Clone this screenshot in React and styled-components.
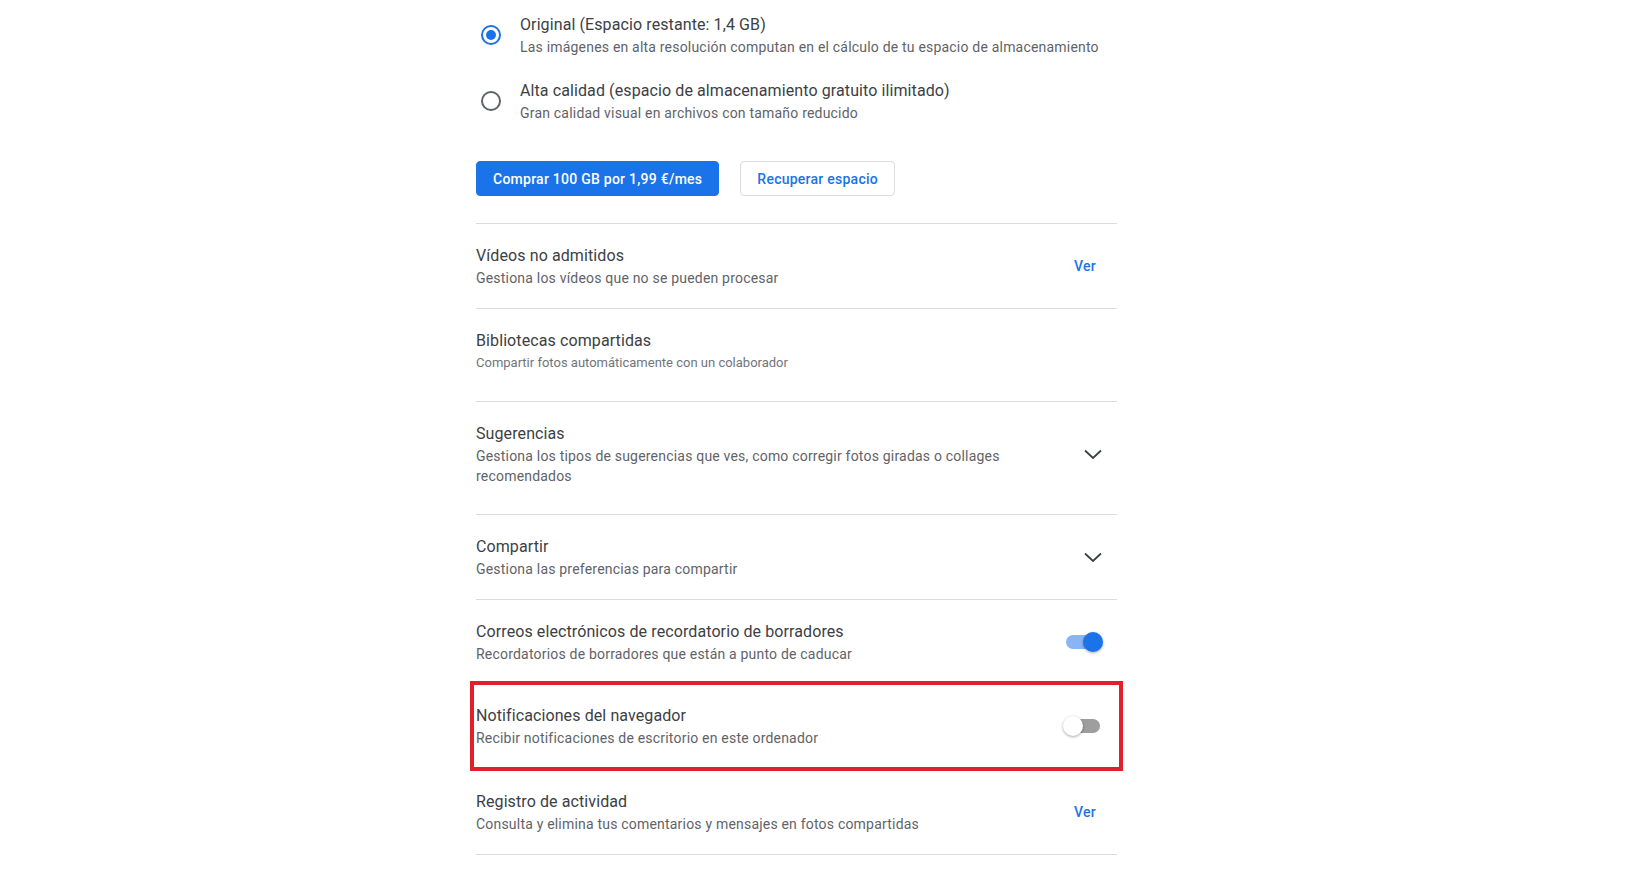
import React from 'react';
import styled, { createGlobalStyle } from 'styled-components';

const GlobalStyle = createGlobalStyle`
  html, body {
    margin: 0;
    padding: 0;
    background: #ffffff;
    font-family: Roboto, "Liberation Sans", Arial, sans-serif;
    color: #3c4043;
  }
`;

const SETTINGS = [
    {
        title: 'Vídeos no admitidos',
        text: 'Gestiona los vídeos que no se pueden procesar',
        action: 'link'
    },
    {
        title: 'Bibliotecas compartidas',
        text: 'Compartir fotos automáticamente con un colaborador',
        small: true,
        extra: 8
    },
    {
        title: 'Sugerencias',
        text: 'Gestiona los tipos de sugerencias que ves, como corregir fotos giradas o collages recomendados',
        action: 'chevron',
        extra: 8
    },
    {
        title: 'Compartir',
        text: 'Gestiona las preferencias para compartir',
        action: 'chevron'
    },
    {
        title: 'Correos electrónicos de recordatorio de borradores',
        text: 'Recordatorios de borradores que están a punto de caducar',
        action: 'switch',
        on: true
    },
    {
        title: 'Notificaciones del navegador',
        text: 'Recibir notificaciones de escritorio en este ordenador',
        action: 'switch',
        on: false,
        noBorder: true,
        highlight: true,
        extra: 2
    },
    {
        title: 'Registro de actividad',
        text: 'Consulta y elimina tus comentarios y mensajes en fotos compartidas',
        action: 'link',
        noBorder: true,
        last: true
    }
];

const Chevron = () => (
    <svg width="24" height="24" viewBox="0 0 24 24" fill="none">
        <polyline points="4,8.5 12,16 20,8.5" stroke="#3c4043" strokeWidth="1.8" />
    </svg>
);

const App = () => {
    return (
        <Page>
            <GlobalStyle />
            <Column>
                <RadioGroup>
                    <RadioOption>
                        <Radio checked />
                        <div>
                            <Title>Original (Espacio restante: 1,4 GB)</Title>
                            <Sub>Las imágenes en alta resolución computan en el cálculo de tu espacio de almacenamiento</Sub>
                        </div>
                    </RadioOption>
                    <RadioOption>
                        <Radio />
                        <div>
                            <Title>Alta calidad (espacio de almacenamiento gratuito ilimitado)</Title>
                            <Sub>Gran calidad visual en archivos con tamaño reducido</Sub>
                        </div>
                    </RadioOption>
                </RadioGroup>

                <ButtonRow>
                    <Button $primary>Comprar 100 GB por 1,99 €/mes</Button>
                    <Button>Recuperar espacio</Button>
                </ButtonRow>

                <SettingsList>
                    {SETTINGS.map(item => (
                        <SettingRow
                            key={item.title}
                            $noBorder={item.noBorder}
                            $last={item.last}
                            $extra={item.extra || 0}
                        >
                            <TextBlock>
                                <Title>{item.title}</Title>
                                <Sub $small={item.small}>{item.text}</Sub>
                            </TextBlock>
                            {item.action === 'link' && <LinkButton>Ver</LinkButton>}
                            {item.action === 'chevron' && <ChevronSlot><Chevron /></ChevronSlot>}
                            {item.action === 'switch' && (
                                <Switch $on={item.on}>
                                    <SwitchThumb $on={item.on} />
                                </Switch>
                            )}
                            {item.highlight && <Highlight />}
                        </SettingRow>
                    ))}
                </SettingsList>
            </Column>
        </Page>
    );
};

const Page = styled.div`
  min-height: 869px;
  padding-left: 476px;
  box-sizing: border-box;
`;

const Column = styled.div`
  width: 641px;
`;

const RadioGroup = styled.div`
  padding-top: 13px;
  display: flex;
  flex-direction: column;
  gap: 22px;
`;

const RadioOption = styled.div`
  display: flex;
  align-items: center;
  gap: 19px;
  padding-left: 5px;
`;

const Radio = styled.span`
  width: 20px;
  height: 20px;
  box-sizing: border-box;
  border-radius: 50%;
  border: 2px solid ${p => (p.checked ? '#1a73e8' : '#5f6368')};
  position: relative;
  flex-shrink: 0;
  &::after {
    content: '';
    display: ${p => (p.checked ? 'block' : 'none')};
    position: absolute;
    left: 3px;
    top: 3px;
    width: 10px;
    height: 10px;
    border-radius: 50%;
    background: #1a73e8;
  }
`;

const Title = styled.div`
  font-size: 16px;
  line-height: 24px;
  letter-spacing: 0.1px;
  color: #3c4043;
`;

const Sub = styled.div`
  font-size: ${p => (p.$small ? '13px' : '14px')};
  line-height: 20px;
  letter-spacing: ${p => (p.$small ? '0' : '0.2px')};
  color: ${p => (p.$small ? '#70757a' : '#5f6368')};
`;

const ButtonRow = styled.div`
  margin-top: 38px;
  display: flex;
  gap: 21px;
`;

const Button = styled.button`
  height: 35px;
  padding: 0 16px;
  box-sizing: border-box;
  border-radius: 4px;
  font-family: Roboto, "Liberation Sans", Arial, sans-serif;
  font-size: 14px;
  font-weight: 500;
  letter-spacing: 0.25px;
  cursor: pointer;
  background: ${p => (p.$primary ? '#1a73e8' : '#ffffff')};
  color: ${p => (p.$primary ? '#ffffff' : '#1a73e8')};
  border: 1px solid ${p => (p.$primary ? '#1a73e8' : '#dadce0')};
`;

const SettingsList = styled.div`
  margin-top: 27px;
`;

const SettingRow = styled.div`
  position: relative;
  display: flex;
  align-items: center;
  justify-content: space-between;
  padding: 20px 0 ${p => 20 + p.$extra}px;
  border-top: ${p => (p.$noBorder ? 'none' : '1px solid #dadce0')};
  border-bottom: ${p => (p.$last ? '1px solid #dadce0' : 'none')};
`;

const TextBlock = styled.div`
  max-width: 560px;
`;

const LinkButton = styled.span`
  font-size: 14px;
  font-weight: 500;
  letter-spacing: 0.25px;
  color: #1a73e8;
  margin-right: 21px;
`;

const ChevronSlot = styled.span`
  display: flex;
  margin-right: 12px;
`;

const Switch = styled.span`
  position: relative;
  width: 34px;
  height: 14px;
  border-radius: 7px;
  margin-right: 17px;
  background: ${p => (p.$on ? '#8ab4f8' : '#9e9e9e')};
`;

const SwitchThumb = styled.span`
  position: absolute;
  top: -3px;
  left: ${p => (p.$on ? '17px' : '-3px')};
  width: 20px;
  height: 20px;
  border-radius: 50%;
  background: ${p => (p.$on ? '#1a73e8' : '#ffffff')};
  box-shadow: 0 1px 3px rgba(0, 0, 0, 0.35);
`;

const Highlight = styled.span`
  position: absolute;
  top: -3px;
  bottom: -1px;
  left: -6px;
  right: -6px;
  border: 4px solid #e2202a;
  pointer-events: none;
`;

export default App;
